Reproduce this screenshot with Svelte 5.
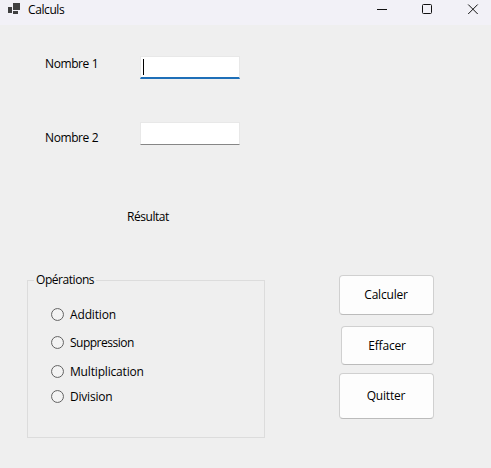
<script>
  let first = $state('');
  let second = $state('');
  const operations = [
    { name: 'Addition', gap: 0, spacing: -0.15 },
    { name: 'Suppression', gap: 12, spacing: -0.5 },
    { name: 'Multiplication', gap: 13, spacing: -0.17 },
    { name: 'Division', gap: 9, spacing: -0.22 }
  ];
</script>

<div class="window">
  <header>
    <svg class="logo" width="12" height="11" viewBox="0 0 12 11" shape-rendering="crispEdges">
      <path d="M0 4h4v6H0zM5 0h7v7H5zM5 8h5v3H5z" fill="#404040" />
    </svg>
    <span class="title">Calculs</span>
    <svg class="controls" width="104" height="20" viewBox="0 0 104 20" fill="none" stroke="#111" stroke-width="1">
      <path d="M0 9.5h10" />
      <rect x="45.5" y="4.5" width="9" height="9" rx="1" />
      <path d="M91.2 4.5l9.5 9.5M100.7 4.5l-9.5 9.5" />
    </svg>
  </header>

  <div class="body">
    <section class="left">
      <div class="row one">
        <span class="label">Nombre 1</span>
        <div class="field active"><i class="caret"></i>{first}</div>
      </div>
      <div class="row two">
        <span class="label">Nombre 2</span>
        <div class="field">{second}</div>
      </div>
      <div class="result"><span class="res">Résultat</span></div>

      <div class="group">
        <div class="top"><i class="stub"></i><span class="legend">Opérations</span><i class="line"></i></div>
        <div class="options">
          {#each operations as op}
            <div class="option" style="margin-top:{op.gap}px">
              <svg width="13" height="13" viewBox="0 0 13 13"><circle cx="6.5" cy="6.5" r="5.95" fill="#f3f3f3" stroke="#626262" /></svg>
              <span style="letter-spacing:{op.spacing}px">{op.name}</span>
            </div>
          {/each}
        </div>
      </div>
    </section>

    <section class="right">
      <button class="calc">Calculer</button>
      <button class="clear">Effacer</button>
      <button class="quit">Quitter</button>
    </section>
  </div>
</div>

<style>
  :global(body) { margin: 0; background: #efefef; }
  .window {
    width: 491px;
    height: 468px;
    overflow: hidden;
    background: #efefef;
    color: #000;
    font: 12px/16px "Open Sans", "Noto Sans", sans-serif;
    letter-spacing: -0.1px;
    white-space: nowrap;
  }
  header {
    height: 25px;
    display: flex;
    align-items: flex-start;
    background: #f2f1f7;
    box-sizing: border-box;
    padding-left: 8px;
  }
  .logo { margin-top: 3px; }
  .title { margin: 2px 0 0 8px; letter-spacing: -0.4px; }
  .controls { margin: 0 10px 0 auto; }
  .body { display: flex; }
  .left { width: 238px; padding: 31px 0 0 27px; }
  .row { display: flex; align-items: flex-start; padding-left: 18px; }
  .one { height: 66px; }
  .two { height: 87px; }
  .label { width: 95px; letter-spacing: -0.4px; }
  .two .label { margin-top: 8px; }
  .field {
    box-sizing: border-box;
    width: 100px;
    height: 23px;
    background: #fff;
    border: 1px solid #e8e8e8;
    border-bottom-color: #868686;
  }
  .active { border-bottom: 2px solid #1e6fb8; }
  .caret { display: block; width: 1px; height: 16px; margin: 2px 0 0 2px; background: #000; }
  .result { height: 63px; padding-left: 100px; letter-spacing: -0.45px; }
  .group { height: 166px; display: flex; flex-direction: column; }
  .top { display: flex; height: 16px; }
  .stub, .line { box-sizing: border-box; margin-top: 8px; border-top: 1px solid #dcdcdc; }
  .stub { width: 7px; border-left: 1px solid #dcdcdc; }
  .line { flex: 1; border-right: 1px solid #dcdcdc; }
  .legend { width: 60px; padding-left: 2px; letter-spacing: -0.45px; }
  .options { flex: 1; border: 1px solid #dcdcdc; border-top: 0; padding: 19px 0 0 23px; }
  .option { height: 16px; display: flex; align-items: flex-start; gap: 6px; }
  .option svg { margin-top: 1px; }
  .right { padding: 250px 0 0 74px; display: flex; flex-direction: column; align-items: flex-end; }
  button {
    box-sizing: border-box;
    width: 95px;
    padding: 0 1px 0 0;
    font: inherit;
    letter-spacing: -0.2px;
    color: #000;
    background: #fdfdfd;
    border: 1px solid #d0d0d0;
    border-bottom-color: #bbb;
    border-radius: 4px;
  }
  .calc { height: 40px; }
  .clear { width: 93px; height: 39px; margin-top: 11px; }
  .quit { height: 46px; margin-top: 8px; }
</style>
